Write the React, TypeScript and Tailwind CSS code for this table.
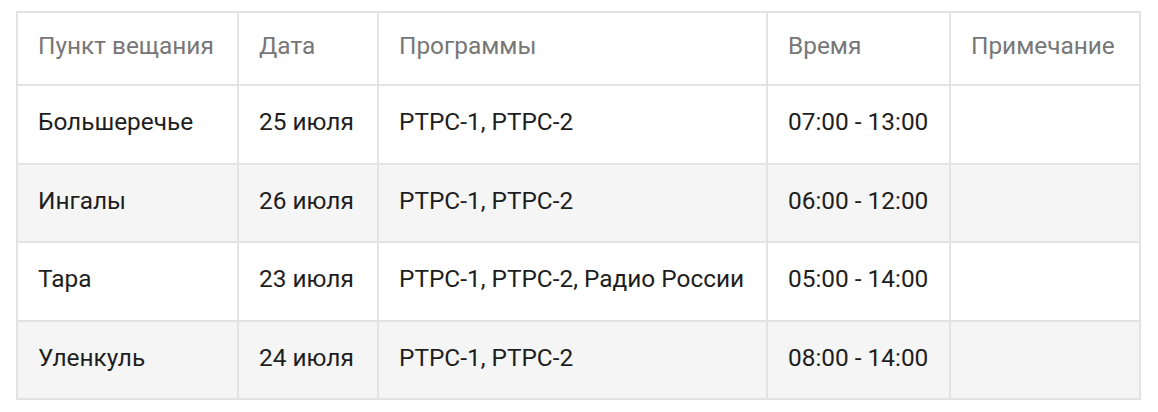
import React from 'react';

interface Row {
    place: string;
    date: string;
    programs: string;
    time: string;
    note: string;
}

const rows: Row[] = [
    { place: 'Большеречье', date: '25 июля', programs: 'РТРС-1, РТРС-2', time: '07:00 - 13:00', note: '' },
    { place: 'Ингалы', date: '26 июля', programs: 'РТРС-1, РТРС-2', time: '06:00 - 12:00', note: '' },
    { place: 'Тара', date: '23 июля', programs: 'РТРС-1, РТРС-2, Радио России', time: '05:00 - 14:00', note: '' },
    { place: 'Уленкуль', date: '24 июля', programs: 'РТРС-1, РТРС-2', time: '08:00 - 14:00', note: '' },
];

const heads = ['Пункт вещания', 'Дата', 'Программы', 'Время', 'Примечание'];
const widths = ['w-[221px]', 'w-[140px]', 'w-[389px]', 'w-[183px]', 'w-[190px]'];
const rowHeights = ['h-[79px]', 'h-[78px]', 'h-[79px]', 'h-[78px]'];

const cell = 'border-2 border-[#e3e3e3] pl-[20px] pr-[16px] pb-[4px] text-[#1e1e1e]';

const App: React.FC = () => {
    return (
        <div className="w-[1158px] h-[412px] bg-white pt-[11px] pl-[16px] font-['Roboto',sans-serif]">
            <table className="border-collapse table-fixed w-[1124px] text-[24.4px] leading-none">
                <colgroup>
                    {widths.map((w, i) => <col key={i} className={w} />)}
                </colgroup>
                <thead>
                    <tr className="h-[73px]">
                        {heads.map((h) => (
                            <th key={h} className="border-2 border-[#e3e3e3] pl-[20px] pr-[16px] pb-[4px] text-left font-normal text-[#777777] align-middle">{h}</th>
                        ))}
                    </tr>
                </thead>
                <tbody>
                    {rows.map((r, idx) => (
                        <tr key={idx} className={`${rowHeights[idx]} ${idx % 2 === 1 ? 'bg-[#f5f5f5]' : 'bg-white'}`}>
                            <td className={cell}>{r.place}</td>
                            <td className={cell}>{r.date}</td>
                            <td className={cell}>{r.programs}</td>
                            <td className={cell}>{r.time}</td>
                            <td className={cell}>{r.note}</td>
                        </tr>
                    ))}
                </tbody>
            </table>
        </div>
    );
};

export default App;
